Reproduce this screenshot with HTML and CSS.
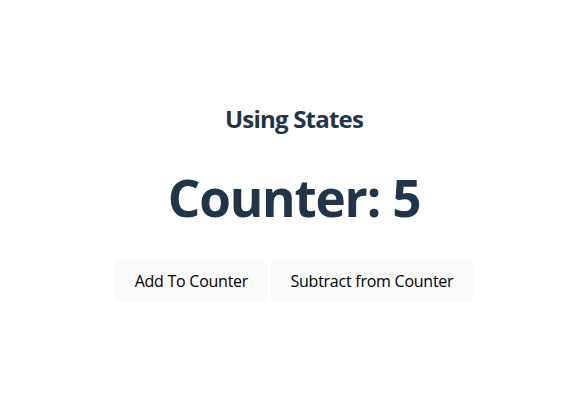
FILE: index.html
```html
<!DOCTYPE html>
<html lang="en">
<head>
<meta charset="utf-8">
<title>Using States</title>
<link rel="stylesheet" href="styles.css">
</head>
<body>
<div class="app">
  <h2 class="subtitle">Using States</h2>
  <h1 class="counter">Counter: 5</h1>
  <div class="actions">
    <button class="btn">Add To Counter</button>
    <button class="btn">Subtract from Counter</button>
  </div>
</div>
</body>
</html>
```

FILE: styles.css
```css
html, body {
  margin: 0;
  padding: 0;
  background: #ffffff;
}
body {
  font-family: "Open Sans", "Noto Sans", sans-serif;
  color: #213547;
}
.app {
  min-height: 100vh;
  display: flex;
  flex-direction: column;
  align-items: center;
  justify-content: center;
  padding-left: 4px;
  padding-top: 3px;
  box-sizing: border-box;
}
.subtitle {
  margin: 0;
  font-size: 24px;
  line-height: 32px;
  font-weight: 700;
  letter-spacing: -0.8px;
}
.counter {
  margin: 32px 0 0;
  font-size: 51.2px;
  line-height: 60px;
  font-weight: 700;
  letter-spacing: -1.2px;
}
.actions {
  margin-top: 33px;
  display: flex;
  gap: 2px;
}
.btn {
  font-family: inherit;
  font-size: 16px;
  font-weight: 500;
  line-height: 21px;
  letter-spacing: -0.25px;
  padding: 9.6px 19.2px;
  border: 1px solid transparent;
  border-radius: 8px;
  background: #f9f9f9;
  color: #000000;
  cursor: pointer;
}
```
